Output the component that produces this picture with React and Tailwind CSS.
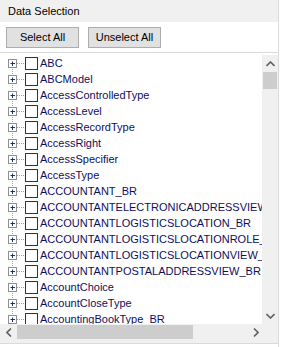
const items = [
  "ABC",
  "ABCModel",
  "AccessControlledType",
  "AccessLevel",
  "AccessRecordType",
  "AccessRight",
  "AccessSpecifier",
  "AccessType",
  "ACCOUNTANT_BR",
  "ACCOUNTANTELECTRONICADDRESSVIEW",
  "ACCOUNTANTLOGISTICSLOCATION_BR",
  "ACCOUNTANTLOGISTICSLOCATIONROLE_BR",
  "ACCOUNTANTLOGISTICSLOCATIONVIEW_BR",
  "ACCOUNTANTPOSTALADDRESSVIEW_BR",
  "AccountChoice",
  "AccountCloseType",
  "AccountingBookType_BR",
];

const Expander = ({ first }) => (
  <svg width="24" height="16" className="shrink-0">
    <line x1="12.5" y1={first ? 8 : 0} x2="12.5" y2="16" stroke="#a0a0a0" strokeDasharray="1 1" />
    <line x1="17" y1="8.5" x2="24" y2="8.5" stroke="#a0a0a0" strokeDasharray="1 1" />
    <rect x="8.5" y="4.5" width="8" height="8" fill="#fff" stroke="#8f8f8f" />
    <line x1="10.5" y1="8.5" x2="15" y2="8.5" stroke="#1c2f7a" />
    <line x1="12.5" y1="6.5" x2="12.5" y2="11" stroke="#1c2f7a" />
  </svg>
);

const TreeRow = ({ label, first }) => (
  <div className="flex items-center h-[16px] shrink-0 whitespace-nowrap">
    <Expander first={first} />
    <div className="w-[13px] h-[13px] border border-[#333] bg-white shrink-0 ml-[1px]" />
    <span className="ml-[2px] text-[11px] leading-[16px] text-[#0f0f5c]">{label}</span>
  </div>
);

export default function App() {
  return (
    <div
      className="w-[281px] h-[347px] bg-white flex overflow-hidden"
      style={{ fontFamily: '"Liberation Sans", Arial, sans-serif' }}
    >
      <div className="w-[279px] border-r border-[#dadada] flex flex-col">
        <div className="h-[22px] bg-[#f0f0f0] pl-[8px] flex items-center text-[11px] text-black">
          Data Selection
        </div>
        <div className="h-[30px] flex items-start gap-[9px] pt-[5px] pl-[6px]">
          <button className="w-[73px] h-[21px] bg-[#e1e1e1] border border-[#adadad] text-[11px] text-black">
            Select All
          </button>
          <button className="w-[73px] h-[21px] bg-[#e1e1e1] border border-[#adadad] text-[11px] text-black">
            Unselect All
          </button>
        </div>
        <div className="border-t border-[#dadada] flex flex-col h-[288px] pt-[2px]">
          <div className="flex flex-1 min-h-0">
            <div className="flex-1 min-w-0 overflow-hidden flex flex-col">
              {items.map((it, i) => (
                <TreeRow key={it} label={it} first={i === 0} />
              ))}
            </div>
            <div className="w-[16px] bg-[#f0f0f0] flex flex-col items-center">
              <div className="h-[17px] w-full flex items-center justify-center">
                <svg width="9" height="6"><path d="M0.5 5 L4.5 1 L8.5 5" fill="none" stroke="#606060" strokeWidth="1.6" /></svg>
              </div>
              <div className="w-[14px] h-[17px] bg-[#cdcdcd]" />
              <div className="flex-1" />
              <div className="h-[17px] w-full flex items-center justify-center">
                <svg width="9" height="6"><path d="M0.5 1 L4.5 5 L8.5 1" fill="none" stroke="#606060" strokeWidth="1.6" /></svg>
              </div>
            </div>
          </div>
          <div className="h-[16px] flex bg-[#f0f0f0]">
            <div className="w-[17px] flex items-center justify-center">
              <svg width="6" height="9"><path d="M5 0.5 L1 4.5 L5 8.5" fill="none" stroke="#606060" strokeWidth="1.6" /></svg>
            </div>
            <div className="w-[176px] h-[14px] mt-[1px] bg-[#cdcdcd]" />
            <div className="flex-1 flex items-center justify-end pr-[3px]">
              <svg width="6" height="9"><path d="M1 0.5 L5 4.5 L1 8.5" fill="none" stroke="#606060" strokeWidth="1.6" /></svg>
            </div>
            <div className="w-[16px]" />
          </div>
        </div>
        <div className="h-[3px] bg-[#f0f0f0]" />
        <div className="border-t border-[#dadada]" />
      </div>
    </div>
  );
}
